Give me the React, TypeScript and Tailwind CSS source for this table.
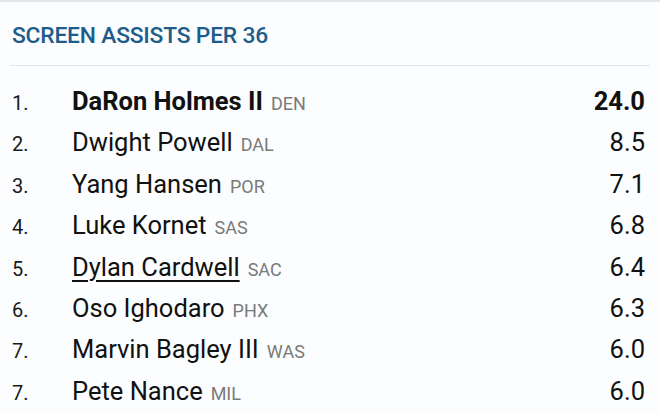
const rows = [
  { rank: "1.", name: "DaRon Holmes II", team: "DEN", value: "24.0", bold: true },
  { rank: "2.", name: "Dwight Powell", team: "DAL", value: "8.5" },
  { rank: "3.", name: "Yang Hansen", team: "POR", value: "7.1" },
  { rank: "4.", name: "Luke Kornet", team: "SAS", value: "6.8" },
  { rank: "5.", name: "Dylan Cardwell", team: "SAC", value: "6.4", underline: true },
  { rank: "6.", name: "Oso Ighodaro", team: "PHX", value: "6.3" },
  { rank: "7.", name: "Marvin Bagley III", team: "WAS", value: "6.0" },
  { rank: "7.", name: "Pete Nance", team: "MIL", value: "6.0" },
];

export default function App() {
  return (
    <div className="w-[660px] h-[414px] overflow-hidden bg-[#fbfdfe] border-t-2 border-[#e3e6e8] font-['Roboto',sans-serif]">
      <div className="px-3 pt-[22px] pb-[17px]">
        <h2 className="text-[22.8px] leading-6 font-medium text-[#1e5c8a] tracking-[-0.2px]">
          SCREEN ASSISTS PER 36
        </h2>
      </div>
      <div className="mx-[10px] h-px bg-[#e4e7ea]" />
      <div className="pt-[15px] pl-3 pr-[15px]">
        {rows.map((r, i) => (
          <div key={i} className="flex items-baseline h-[41.4px] leading-[41.4px]">
            <span className="w-[60px] text-[20px] text-[#1a1a1a]">{r.rank}</span>
            <span
              className={`text-[25.5px] text-[#111] ${r.bold ? "font-bold" : ""} ${r.underline ? "underline underline-offset-[4px] decoration-[1.5px]" : ""}`}
            >
              {r.name}
            </span>
            <span className="ml-[8px] text-[18px] text-[#7a7a7a]">{r.team}</span>
            <span className={`ml-auto text-[25.5px] text-[#111] ${r.bold ? "font-bold" : ""}`}>{r.value}</span>
          </div>
        ))}
      </div>
    </div>
  );
}
